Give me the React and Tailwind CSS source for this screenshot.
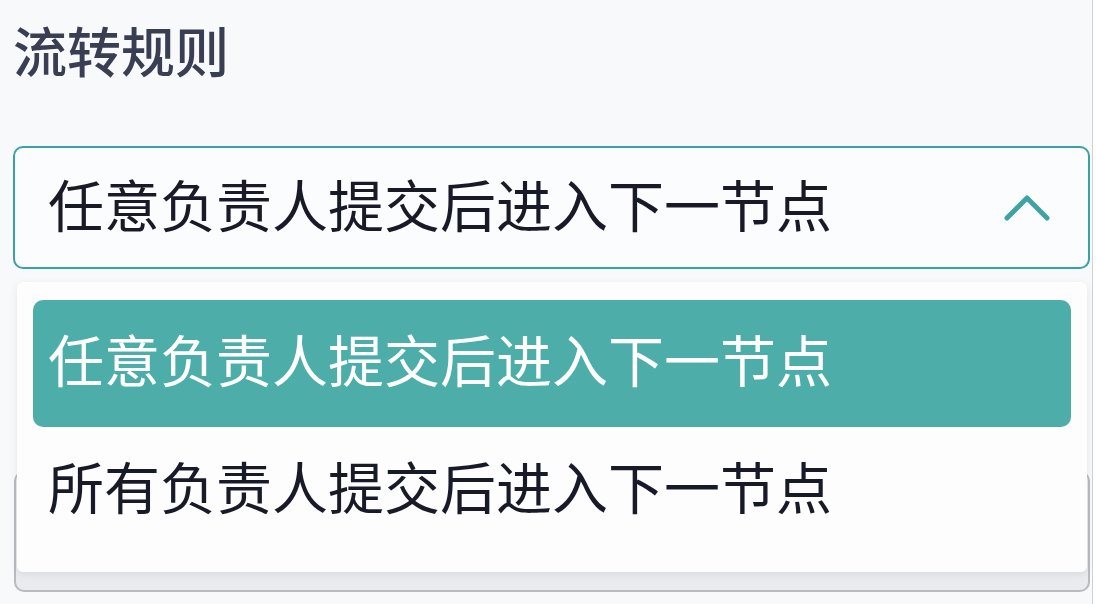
export default function App() {
  const font = { fontFamily: '"Noto Sans CJK SC", "Noto Sans", sans-serif' };
  return (
    <div className="w-[1096px] h-[604px] bg-white overflow-hidden" style={font}>
      <div className="relative w-[1093px] h-[604px] bg-[#f8f9fb] border-r border-[#d0d2d6]">
        <div className="h-[104px] flex items-center pl-[13px] pb-[4px] text-[54px] font-medium leading-none text-[#3a3e52]">
          流转规则
        </div>
        <div className="mt-[42px] ml-[13px] w-[1077px] h-[123px] border-2 border-[#3aa2a6] rounded-[10px] bg-[#fbfcfd] flex items-center justify-between pl-[33px] pr-[38px]">
          <span className="text-[56px] leading-none text-[#181a28] pb-[10px]">任意负责人提交后进入下一节点</span>
          <svg width="46" height="28" viewBox="0 0 46 28" fill="none">
            <polyline points="3,24 23,4 43,24" stroke="#3fa3a6" strokeWidth="5" strokeLinecap="round" strokeLinejoin="round" />
          </svg>
        </div>
        <div className="mt-[202px] ml-[14px] w-[1076px] h-[121px] border-2 border-[#b8bbc0] rounded-[10px] bg-[#e9ebee]"></div>
        <div className="absolute top-[282px] left-[17px] w-[1070px] h-[290px] bg-[#fdfdfe] rounded-[6px] shadow-[0_2px_8px_rgba(0,0,0,0.08)] px-[16px] pt-[18px]">
          <div className="h-[127px] rounded-[10px] bg-[#4dada8] flex items-center pl-[15px] pb-[12px] text-[56px] leading-none text-white">
            任意负责人提交后进入下一节点
          </div>
          <div className="h-[123px] flex items-center pl-[15px] pb-[8px] text-[56px] leading-none text-[#181a28]">
            所有负责人提交后进入下一节点
          </div>
        </div>
      </div>
    </div>
  );
}
